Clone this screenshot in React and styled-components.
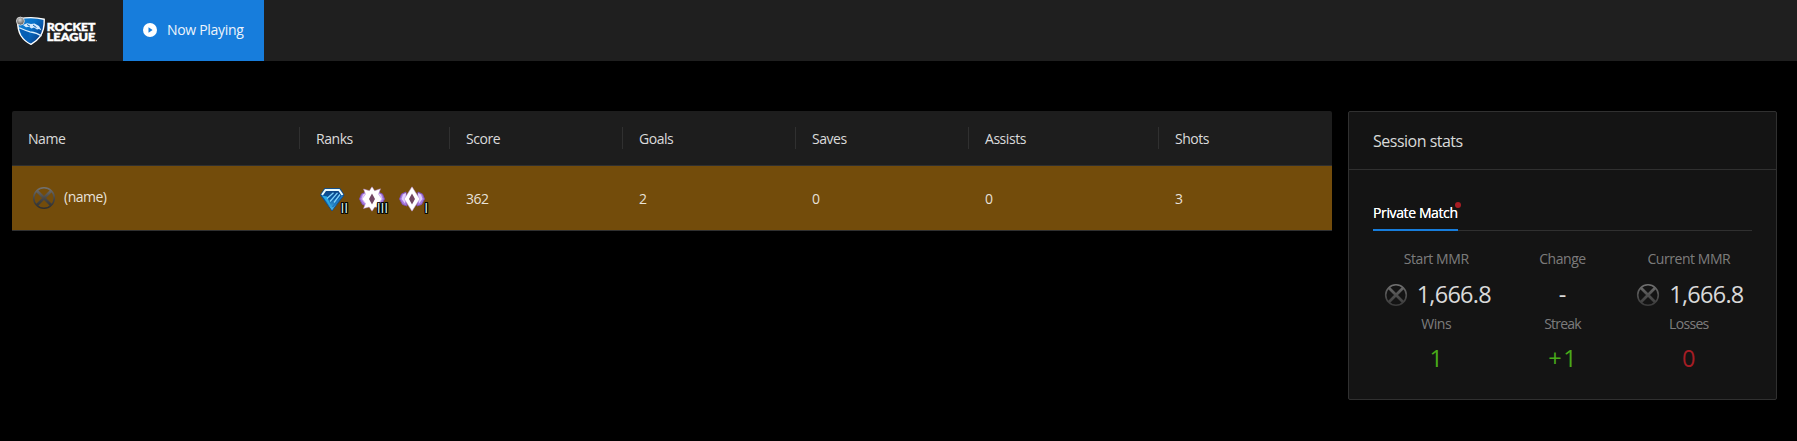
import React from "react";
import styled, { createGlobalStyle } from "styled-components";

const GlobalStyle = createGlobalStyle`
  * { box-sizing: border-box; }
  body {
    margin: 0;
    background: #000;
    color: rgba(255, 255, 255, 0.85);
    font: 14px/22px "Open Sans", "Noto Sans", sans-serif;
  }
`;

const Header = styled.header`
  display: flex;
  height: 61px;
  background: #1f1f1f;
`;

const Brand = styled.div`
  width: 123px;
  padding: 15px 0 0 14px;
`;

const NavItem = styled.a`
  display: flex;
  align-items: center;
  gap: 10px;
  width: 141px;
  padding: 0 0 1px 20px;
  background: #177ddc;
  color: #fff;
`;

const Text = styled.span`
  letter-spacing: ${(p) => p.$track ?? -0.45}px;
  white-space: nowrap;
`;

const NavLabel = styled(Text)`
  line-height: 22px;
  opacity: 0.92;
`;

const Page = styled.main`
  display: flex;
  align-items: flex-start;
  gap: 16px;
  padding: 50px 20px 0 12px;
`;

const Table = styled.section`
  flex: 0 0 1320px;
  border-radius: 2px 2px 0 0;
  overflow: hidden;
`;

const Row = styled.div`
  display: grid;
  grid-template-columns: 288px 150px 173px 173px 173px 190px 173px;
  align-items: center;
  border-bottom: 1px solid #303030;
`;

const HeadRow = styled(Row)`
  height: 55px;
  background: #1d1d1d;
`;

const PlayerRow = styled(Row)`
  height: 65px;
  background: #734c0b;
`;

const HeadCell = styled.div`
  height: 22px;
  padding-left: 16px;
  border-right: 1px solid ${(p) => (p.$last ? "transparent" : "#303030")};
`;

const HeadLabel = styled(Text)`
  display: block;
  padding-top: 1px;
`;

const Cell = styled.div`
  padding: 2px 0 0 16px;
`;

const Player = styled.div`
  display: flex;
  align-items: center;
  gap: 8px;
  padding-left: 20px;
`;

const PlayerName = styled(Text)`
  margin-top: -2px;
`;

const Ranks = styled.div`
  display: flex;
  gap: 16px;
  padding: 1px 0 0 20px;
`;

const Rank = styled.div`
  position: relative;
  width: 24px;
  height: 26px;
`;

const Division = styled.span`
  position: absolute;
  right: -4px;
  bottom: -5px;
  font-size: 14px;
  line-height: 18px;
  letter-spacing: -0.2px;
  color: #d8f4ee;
  text-shadow: -1px -1px 0 #000, 1px -1px 0 #000, -1px 1px 0 #000,
    1px 1px 0 #000, 0 1px 0 #000, 0 -1px 0 #000, 1px 0 0 #000, -1px 0 0 #000;
`;

const Card = styled.aside`
  flex: 0 0 429px;
  height: 289px;
  border: 1px solid #303030;
  border-radius: 2px;
  background: #141414;
`;

const CardTitle = styled.div`
  height: 58px;
  padding: 17px 24px 0;
  border-bottom: 1px solid #303030;
  font-size: 16px;
  line-height: 25px;
`;

const CardBody = styled.div`
  padding: 32px 24px 0;
`;

const Tabs = styled.div`
  display: flex;
  height: 29px;
  border-bottom: 1px solid #303030;
`;

const Tab = styled.div`
  position: relative;
  width: 85px;
  height: 29px;
  border-bottom: 2px solid #177ddc;
  color: #fff;
  text-shadow: 0 0 0.25px currentColor;
`;

const Dot = styled.i`
  position: absolute;
  top: 0;
  right: -3px;
  width: 6px;
  height: 6px;
  border-radius: 50%;
  background: #a61d24;
`;

const Stats = styled.div`
  display: grid;
  grid-template-columns: repeat(3, 1fr);
  padding-top: 17px;
  text-align: center;
`;

const Stat = styled.div`
  height: 65px;
`;

const StatLabel = styled(Text)`
  display: block;
  color: rgba(255, 255, 255, 0.45);
`;

const StatValue = styled.div`
  display: flex;
  justify-content: center;
  align-items: center;
  gap: 9px;
  height: 38px;
  margin-top: ${(p) => (p.$color ? 4 : 5)}px;
  padding-left: ${(p) => (p.$icon ? 3 : 0)}px;
  font-size: 23.5px;
  color: ${(p) => p.$color || "inherit"};
`;

const StatFigure = styled(Text)`
  margin-right: ${(p) => -p.$track}px;
`;

const IconSlot = styled.span`
  display: flex;
  padding-top: 1px;
`;

function Logo() {
  return (
    <svg width="84" height="32" viewBox="0 0 84 32">
      <defs>
        <linearGradient id="shield" x1="0" y1="0" x2="1" y2="0.7">
          <stop offset="0" stopColor="#1583d6" />
          <stop offset="0.5" stopColor="#0872c9" />
          <stop offset="1" stopColor="#063a86" />
        </linearGradient>
        <radialGradient id="ball" cx="0.45" cy="0.35" r="0.6">
          <stop offset="0" stopColor="#d5d5d5" />
          <stop offset="1" stopColor="#5b5b5b" />
        </radialGradient>
      </defs>
      <path d="M5 4Q17 1.2 30.2 4.2Q30.6 15 26 21.6Q22.5 26.4 17 29.3Q10.5 26.5 6.8 20.5Q3.5 14.5 3.6 5Z" fill="url(#shield)" stroke="#fff" strokeWidth="1.4" />
      <path d="M5.3 14Q7 20 11 24Q14 27 17 28Q13 21 16 17Q10 13.5 5.3 14Z" fill="#075fb4" />
      <path d="M5.2 12.8Q11 15.4 16 16.8Q23 17.6 27.6 21" fill="none" stroke="#d9efff" strokeWidth="1.2" />
      <path d="M9 10L13 8.3L17 9L20.5 8.5L25 11L27.5 15.4L25 14L23 14.6L20 12.6L17.5 13.6L15 11.8L12 12.2Z" fill="#d4ebff" />
      <path d="M13 9.5L16 11.2M19 10L22.5 12.6" stroke="#0c63af" strokeWidth="1" />
      <circle cx="6.4" cy="6.1" r="4" fill="url(#ball)" stroke="#e4e4e4" strokeWidth="0.8" />
      <g fill="#fff" stroke="#fff" strokeWidth="0.5" fontFamily="Lato, sans-serif" fontWeight="900" fontSize="12">
        <text x="32.7" y="15.8" textLength="48.6" lengthAdjust="spacingAndGlyphs">ROCKET</text>
        <text x="32.7" y="26.3" textLength="48.6" lengthAdjust="spacingAndGlyphs">LEAGUE</text>
      </g>
      <circle cx="82.4" cy="25.7" r="0.6" fill="#ccc" />
    </svg>
  );
}

function PlayIcon() {
  return (
    <svg width="14" height="14" viewBox="0 0 14 14">
      <circle cx="7" cy="7" r="7" fill="#fff" />
      <path d="M5.5 4.2L9.6 7L5.5 9.8Z" fill="#177ddc" />
    </svg>
  );
}

function Unranked({ id, dark }) {
  return (
    <svg width="24" height="24" viewBox="0 0 24 24">
      <defs>
        <linearGradient id={id} gradientUnits="userSpaceOnUse" x1="0" y1="1" x2="0" y2="23">
          <stop offset="0" stopColor="#747474" />
          <stop offset="0.5" stopColor={dark ? "#484848" : "#505050"} />
          <stop offset="1" stopColor={dark ? "#2d2d2d" : "#3a3a3a"} />
        </linearGradient>
      </defs>
      <g fill="none" stroke={`url(#${id})`}>
        <circle cx="12" cy="12" r="10.3" strokeWidth="1.6" />
        <path d="M5 5L19 19M19 5L5 19" strokeWidth="2.8" />
      </g>
    </svg>
  );
}

function DiamondIcon() {
  return (
    <svg width="26" height="26" viewBox="0 0 26 26">
      <defs>
        <linearGradient id="gem" x1="0" y1="0" x2="0" y2="1">
          <stop offset="0" stopColor="#0f3f7c" />
          <stop offset="0.45" stopColor="#0a58a2" />
          <stop offset="1" stopColor="#55c9f5" />
        </linearGradient>
      </defs>
      <path d="M4.5 2.5H20L24 9L12 25L.5 9Z" fill="url(#gem)" stroke="#164f88" strokeWidth="1" />
      <path d="M2 9L5.5 3.9H19L22.5 9" fill="none" stroke="#e9fbff" strokeWidth="2" />
      <path d="M1.8 9.5L7 10.5L12 22.5Z" fill="#27a9e6" />
      <path d="M7 12.5L13.5 6.8M10 15.5L17.5 6.8M14 16.5L20 8.5" stroke="#7fd2fa" strokeWidth="1.3" />
      <path d="M12.5 21L22.5 9.5" stroke="#1c78c1" strokeWidth="1.5" />
    </svg>
  );
}

function ChampionIcon({ spikes }) {
  return (
    <svg width="26" height="26" viewBox="0 0 26 26" overflow="visible">
      <path d="M6 6L1.5 8L-.5 13L2.5 18.5L7 20ZM18 6L22.5 8L24.5 13L21.5 18.5L17 20Z" fill="#a77bdf" stroke="#8050b4" strokeWidth="0.9" />
      <path d="M6 7L3 8.5L1.5 13L5 17.5ZM18 7L21 8.5L22.5 13L19 17.5Z" fill="#e0ceff" />
      <path
        d={
          spikes
            ? "M12 .8L14.6 4.7L20.5 2.8L18.5 8.2L22 13L18.5 17.5L20.5 22L14.8 21L12 25.2L9.2 21L3.5 22.5L5.5 17.5L2 13L5.5 8.2L3.5 3L9.4 4.7Z"
            : "M12 .8L19.8 13L12 25.2L4.2 13Z"
        }
        fill="#fff"
        stroke="#b88ad8"
        strokeWidth="0.5"
      />
      <path d="M12 7.5L15 13L12 18.5L9 13Z" fill="#734763" />
    </svg>
  );
}

const columns = ["Name", "Ranks", "Score", "Goals", "Saves", "Assists", "Shots"];
const scores = ["362", "2", "0", "0", "3"];
const GREEN = "#49aa19";
const RED = "#a61d24";

const stats = [
  { label: "Start MMR", value: "1,666.8", icon: true, track: -0.4 },
  { label: "Change", value: "-" },
  { label: "Current MMR", value: "1,666.8", icon: true },
  { label: "Wins", value: "1", color: GREEN },
  { label: "Streak", value: "+1", color: GREEN, track: -0.8, valueTrack: 1.5 },
  { label: "Losses", value: "0", color: RED, track: -0.7 },
];

export default function App() {
  return (
    <>
      <GlobalStyle />
      <Header>
        <Brand><Logo /></Brand>
        <NavItem>
          <PlayIcon />
          <NavLabel $track={-0.3}>Now Playing</NavLabel>
        </NavItem>
      </Header>
      <Page>
        <Table>
          <HeadRow>
            {columns.map((c, i) => (
              <HeadCell key={c} $last={i === columns.length - 1}>
                <HeadLabel $track={-0.45}>{c}</HeadLabel>
              </HeadCell>
            ))}
          </HeadRow>
          <PlayerRow>
            <Player>
              <Unranked id="unranked-row" dark />
              <PlayerName $track={-0.5}>(name)</PlayerName>
            </Player>
            <Ranks>
              <Rank><DiamondIcon /><Division>II</Division></Rank>
              <Rank><ChampionIcon spikes /><Division>III</Division></Rank>
              <Rank><ChampionIcon /><Division>I</Division></Rank>
            </Ranks>
            {scores.map((s, i) => (
              <Cell key={i}><Text $track={-0.5}>{s}</Text></Cell>
            ))}
          </PlayerRow>
        </Table>
        <Card>
          <CardTitle><Text $track={-0.5}>Session stats</Text></CardTitle>
          <CardBody>
            <Tabs>
              <Tab><Text $track={-0.38}>Private Match</Text><Dot /></Tab>
            </Tabs>
            <Stats>
              {stats.map((s, i) => (
                <Stat key={s.label}>
                  <StatLabel $track={s.track}>{s.label}</StatLabel>
                  <StatValue $icon={s.icon} $color={s.color}>
                    {s.icon && <IconSlot><Unranked id={`unranked-${i}`} /></IconSlot>}
                    <StatFigure $track={s.valueTrack ?? -0.75}>{s.value}</StatFigure>
                  </StatValue>
                </Stat>
              ))}
            </Stats>
          </CardBody>
        </Card>
      </Page>
    </>
  );
}
